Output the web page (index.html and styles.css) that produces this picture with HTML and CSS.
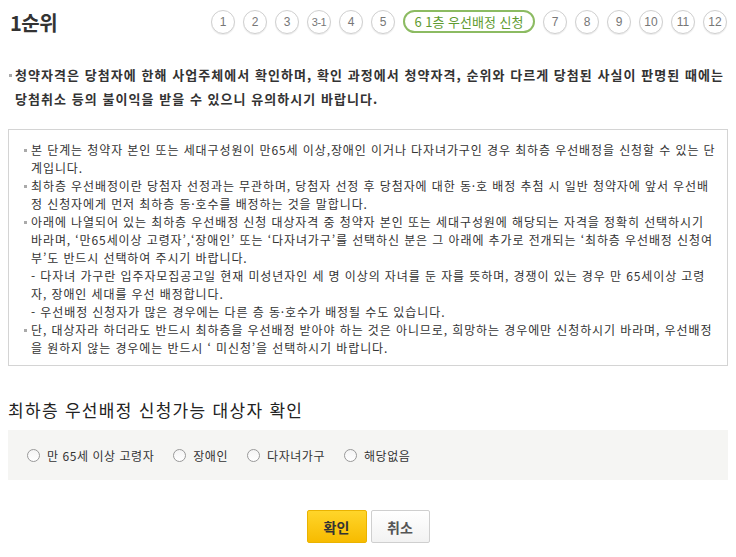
FILE: index.html
```html
<!DOCTYPE html>
<html lang="ko">
<head>
  <meta charset="UTF-8">
  <title>1순위 - 최하층 우선배정 신청</title>
  <link rel="stylesheet" href="styles.css">
</head>
<body>
  <div class="top">
    <h1>1순위</h1>
    <ol class="steps">
      <li>1</li>
      <li>2</li>
      <li>3</li>
      <li class="small">3-1</li>
      <li>4</li>
      <li>5</li>
      <li class="on">6 1층 우선배정 신청</li>
      <li>7</li>
      <li>8</li>
      <li>9</li>
      <li>10</li>
      <li>11</li>
      <li>12</li>
    </ol>
  </div>

  <p class="notice">청약자격은 당첨자에 한해 사업주체에서 확인하며, 확인 과정에서 청약자격, 순위와 다르게 당첨된 사실이 판명된 때에는 당첨취소 등의 불이익을 받을 수 있으니 유의하시기 바랍니다.</p>

  <div class="guide">
    <ul>
      <li>본 단계는 청약자 본인 또는 세대구성원이 만65세 이상,장애인 이거나 다자녀가구인 경우 최하층 우선배정을 신청할 수 있는 단계입니다.</li>
      <li>최하층 우선배정이란 당첨자 선정과는 무관하며, 당첨자 선정 후 당첨자에 대한 동·호 배정 추첨 시 일반 청약자에 앞서 우선배정 신청자에게 먼저 최하층 동·호수를 배정하는 것을 말합니다.</li>
      <li>아래에 나열되어 있는 최하층 우선배정 신청 대상자격 중 청약자 본인 또는 세대구성원에 해당되는 자격을 정확히 선택하시기 바라며, ‘만65세이상 고령자’,‘장애인’ 또는 ‘다자녀가구’를 선택하신 분은 그 아래에 추가로 전개되는 ‘최하층 우선배정 신청여부’도 반드시 선택하여 주시기 바랍니다.
        <p class="sub">- 다자녀 가구란 입주자모집공고일 현재 미성년자인 세 명 이상의 자녀를 둔 자를 뜻하며, 경쟁이 있는 경우 만 65세이상 고령자, 장애인 세대를 우선 배정합니다.</p>
        <p class="sub">- 우선배정 신청자가 많은 경우에는 다른 층 동·호수가 배정될 수도 있습니다.</p>
      </li>
      <li>단, 대상자라 하더라도 반드시 최하층을 우선배정 받아야 하는 것은 아니므로, 희망하는 경우에만 신청하시기 바라며, 우선배정을 원하지 않는 경우에는 반드시 ‘ 미신청’을 선택하시기 바랍니다.</li>
    </ul>
  </div>

  <h2>최하층 우선배정 신청가능 대상자 확인</h2>
  <div class="choice">
    <label><input type="radio" name="target"> 만 65세 이상 고령자</label>
    <label><input type="radio" name="target"> 장애인</label>
    <label><input type="radio" name="target"> 다자녀가구</label>
    <label><input type="radio" name="target"> 해당없음</label>
  </div>

  <div class="btns">
    <button class="ok">확인</button>
    <button class="cancel">취소</button>
  </div>
</body>
</html>
```

FILE: styles.css
```css
body {
  margin: 8px;
  font-family: "Noto Sans CJK KR", "Noto Sans", sans-serif;
  font-size: 12px;
  color: #333;
}

.top {
  display: flex;
  justify-content: space-between;
  align-items: center;
  height: 28px;
}

.top h1 {
  margin: 0 0 0 2px;
  font-size: 20px;
  font-weight: bold;
  color: #333;
  letter-spacing: -0.5px;
}

.steps {
  display: flex;
  gap: 8px;
  margin: 0 1px 0 0;
  padding: 0;
  list-style: none;
}

.steps li {
  width: 22px;
  height: 22px;
  border: 1px solid #d0d0d0;
  border-radius: 50%;
  box-shadow: 0 1px 1px rgba(0, 0, 0, 0.08);
  background: #fff;
  display: flex;
  align-items: center;
  justify-content: center;
  font-family: "Liberation Sans", Arial, sans-serif;
  font-size: 12px;
  color: #777;
}

.steps li.small {
  font-size: 11px;
  letter-spacing: -0.5px;
}

.steps li.on {
  width: 128px;
  height: 19px;
  border: 2px solid #8cbb62;
  border-radius: 12px;
  font-family: "Noto Sans CJK KR", sans-serif;
  font-size: 13px;
  color: #5f9b30;
  box-shadow: none;
}

.notice {
  position: relative;
  margin: 27px 0 0;
  padding-left: 7px;
  font-size: 13px;
  font-weight: bold;
  line-height: 24px;
  letter-spacing: 1.05px;
  color: #333;
}

.notice::before {
  content: "";
  position: absolute;
  left: 1px;
  top: 11px;
  width: 3px;
  height: 3px;
  background: #aaa;
}

.guide {
  margin-top: 18px;
  border: 1px solid #d4d4d4;
  padding: 11px 10px 8px 15px;
}

.guide ul {
  margin: 0;
  padding: 0;
  list-style: none;
}

.guide li {
  position: relative;
  padding-left: 7px;
  line-height: 18px;
  letter-spacing: 0.9px;
  color: #333;
}

.guide li::before {
  content: "";
  position: absolute;
  left: 0;
  top: 8px;
  width: 3px;
  height: 3px;
  background: #aaa;
}

.guide .sub {
  margin: 0;
}

h2 {
  margin: 33px 0 0;
  font-size: 17px;
  font-weight: normal;
  letter-spacing: 1.3px;
  color: #222;
  line-height: 22px;
}

.choice {
  margin-top: 9px;
  height: 50px;
  background: #f5f5f3;
  display: flex;
  align-items: center;
  gap: 19px;
  padding-left: 19px;
}

.choice label {
  display: flex;
  align-items: center;
  gap: 7px;
  letter-spacing: 0.55px;
  color: #333;
}

.choice input {
  appearance: none;
  margin: 0;
  width: 13px;
  height: 13px;
  border: 1px solid #999;
  border-radius: 50%;
  background: linear-gradient(#f4f4f4, #fff);
}

.btns {
  display: flex;
  justify-content: center;
  gap: 4px;
  margin-top: 30px;
}

.btns button {
  height: 33px;
  border-radius: 2px;
  font-family: "Noto Sans CJK KR", sans-serif;
  font-size: 14px;
  font-weight: bold;
  cursor: pointer;
}

.ok {
  width: 60px;
  border: 1px solid #eab300;
  background: linear-gradient(#ffd52a, #f7bb00);
  color: #333;
}

.cancel {
  width: 59px;
  border: 1px solid #cfcfcf;
  background: linear-gradient(#fff, #f2f2f2);
  color: #555;
}
```
